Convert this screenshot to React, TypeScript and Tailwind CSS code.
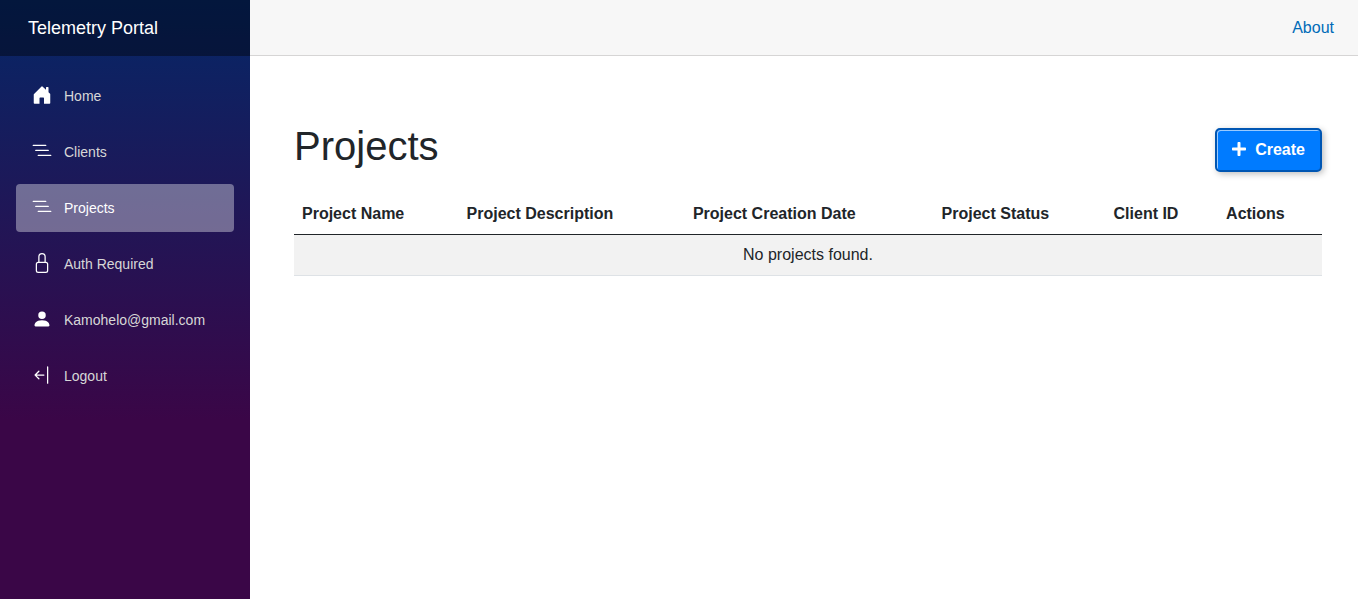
import React from "react";
import { FaPlus } from "react-icons/fa";

const icons = {
  home: "M6 15v-4.5c0-.3.2-.5.5-.5h2.6c.3 0 .5.2.5.5V15H14a.6.6 0 0 0 .6-.6V7.3a.5.5 0 0 0-.15-.36L13.2 5.7V2a.5.5 0 0 0-.5-.5h-1a.5.5 0 0 0-.5.5v1.7L8.354 1.146a.5.5 0 0 0-.708 0l-6 6A.5.5 0 0 0 1.4 7.5v6.9a.6.6 0 0 0 .6.6Z",
  list: "M4.5 11.5A.5.5 0 0 1 5 11h10a.5.5 0 0 1 0 1H5a.5.5 0 0 1-.5-.5zm-2-4A.5.5 0 0 1 3 7h10a.5.5 0 0 1 0 1H3a.5.5 0 0 1-.5-.5zm-2-4A.5.5 0 0 1 1 3h10a.5.5 0 0 1 0 1H1a.5.5 0 0 1-.5-.5z",
  lock: "M8 1a2 2 0 0 1 2 2v4H6V3a2 2 0 0 1 2-2zm3 6V3a3 3 0 0 0-6 0v4a2 2 0 0 0-2 2v5a2 2 0 0 0 2 2h6a2 2 0 0 0 2-2V9a2 2 0 0 0-2-2zM5 8h6a1 1 0 0 1 1 1v5a1 1 0 0 1-1 1H5a1 1 0 0 1-1-1V9a1 1 0 0 1 1-1z",
  person: "M3 14s-1 0-1-1 1-4 6-4 6 3 6 4-1 1-1 1H3Zm5-6a3 3 0 1 0 0-6 3 3 0 0 0 0 6Z",
  logout: "M12.5 15a.5.5 0 0 1-.5-.5v-13a.5.5 0 0 1 1 0v13a.5.5 0 0 1-.5.5ZM10 8a.5.5 0 0 1-.5.5H3.707l2.147 2.146a.5.5 0 0 1-.708.708l-3-3a.5.5 0 0 1 0-.708l3-3a.5.5 0 1 1 .708.708L3.707 7.5H9.5a.5.5 0 0 1 .5.5Z",
};

type NavItem = { label: string; icon: keyof typeof icons; active?: boolean };

const navItems: NavItem[] = [
  { label: "Home", icon: "home" },
  { label: "Clients", icon: "list" },
  { label: "Projects", icon: "list", active: true },
  { label: "Auth Required", icon: "lock" },
  { label: "Kamohelo@gmail.com", icon: "person" },
  { label: "Logout", icon: "logout" },
];

const columns = [
  "Project Name",
  "Project Description",
  "Project Creation Date",
  "Project Status",
  "Client ID",
  "Actions",
];

function Sidebar() {
  return (
    <aside className="w-[250px] shrink-0 bg-[linear-gradient(180deg,#052767_0%,#3a0647_70%)]">
      <div className="flex h-14 items-center bg-black/40 px-7">
        <a href="#" className="text-lg text-white">
          Telemetry Portal
        </a>
      </div>
      <nav className="flex flex-col gap-2 px-4 py-4">
        {navItems.map(({ label, icon, active }) => (
          <a
            key={label}
            href="#"
            aria-current={active ? "page" : undefined}
            className={
              "flex h-12 items-center gap-3 rounded px-4 text-sm " +
              (active ? "bg-white/37 text-white" : "text-[#d7d7d7]")
            }
          >
            <svg viewBox="0 0 16 16" className="mb-0.5 size-5 shrink-0 fill-white" aria-hidden="true">
              <path d={icons[icon]} />
            </svg>
            {label}
          </a>
        ))}
      </nav>
    </aside>
  );
}

function ProjectsTable() {
  return (
    <table className="w-full border-collapse text-left">
      <thead>
        <tr className="border-b border-[#212529]">
          {columns.map((label) => (
            <th key={label} scope="col" className="p-2 font-bold">
              {label}
            </th>
          ))}
        </tr>
      </thead>
      <tbody>
        <tr className="border-b border-[#dee2e6] bg-[#f2f2f2]">
          <td colSpan={columns.length} className="p-2 text-center">
            No projects found.
          </td>
        </tr>
      </tbody>
    </table>
  );
}

export default function App() {
  return (
    <div className="flex min-h-screen bg-white font-['Liberation_Sans',Arial,sans-serif] text-base text-[#212529]">
      <Sidebar />
      <div className="min-w-0 flex-1">
        <header className="flex h-14 items-center justify-end border-b border-[#d6d5d5] bg-[#f7f7f7] px-6">
          <a href="#" className="text-[#006bb7]">
            About
          </a>
        </header>
        <main className="pt-16 pr-9 pl-11">
          <div className="mb-[22px] flex items-start justify-between pt-2">
            <h1 className="text-[40px] leading-9">Projects</h1>
            <button
              type="button"
              className="flex h-11 items-center gap-2 rounded-[5px] border-2 border-[#0056b3] bg-[#007bff] pr-[15px] pl-3.5 font-bold text-white shadow-[inset_1px_1px_0_rgba(255,255,255,0.6),2px_2px_6px_rgba(0,0,0,0.25)]"
            >
              <FaPlus className="mb-0.5 size-4" aria-hidden="true" />
              Create
            </button>
          </div>
          <ProjectsTable />
        </main>
      </div>
    </div>
  );
}
